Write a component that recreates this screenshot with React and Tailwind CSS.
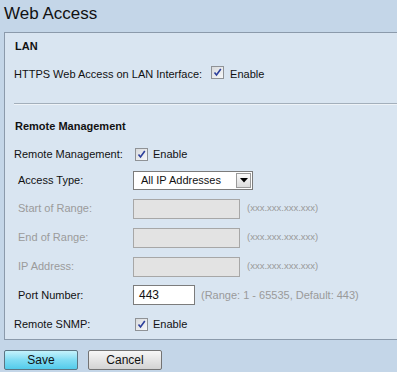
import React from 'react'

const Check = () => (
  <span className="inline-flex w-[13px] h-[13px] shrink-0 items-center justify-center border border-[#8f9296] bg-gradient-to-br from-[#d8dadd] to-[#f7f8f9]">
    <svg width="11" height="11" viewBox="0 0 11 11">
      <path d="M2.5 5.5 L4.5 8 L8.8 2" fill="none" stroke="#2c3f9c" strokeWidth="1.6" />
    </svg>
  </span>
)

const DisabledRow = ({ label, h }) => (
  <div className={`flex items-center ${h}`}>
    <div className="w-[119px] pl-[4px] text-[#9b9b9b]">{label}</div>
    <div className="w-[107px] h-[20px] border border-[#a7a7a7] bg-[#e3e3e3]" />
    <span className="ml-[7px] text-[9.5px] text-[#9a9a9a]">(xxx.xxx.xxx.xxx)</span>
  </div>
)

export default function App() {
  return (
    <div className="w-[397px] h-[372px] overflow-hidden bg-[#c4d6e8] font-['Liberation_Sans',Arial,sans-serif] text-[11px] text-[#111]">
      <h1 className="h-[32px] pl-[4px] pt-[3px] text-[17px] leading-[22px] text-[#111]">Web Access</h1>

      <div className="ml-[4px] border-l border-t border-b border-[#8b9aab] bg-[#d9e5f1] pl-[9px]">
        <div className="h-[27px] flex items-center pl-px font-bold">LAN</div>
        <div className="h-[28px] flex items-center">
          <span>HTTPS Web Access on LAN Interface:</span>
          <span className="ml-[9px]"><Check /></span>
          <span className="ml-[6px]">Enable</span>
        </div>

        <div className="mt-[15px] border-t border-b border-t-[#a3afbb] border-b-[#eef3f8]" />

        <div className="h-[36px] pt-[6px] flex items-center pl-px font-bold">Remote Management</div>

        <div className="h-[26px] flex items-center">
          <div className="w-[121px]">Remote Management:</div>
          <Check />
          <span className="ml-[5px]">Enable</span>
        </div>

        <div className="h-[27px] flex items-center">
          <div className="w-[119px] pl-[4px]">Access Type:</div>
          <div className="w-[120px] h-[19px] flex items-center border border-[#7b7b7b] bg-white">
            <span className="flex-1 pl-[7px]">All IP Addresses</span>
            <span className="w-[15px] h-[15px] mr-px flex items-center justify-center border border-[#9a9a9a] bg-gradient-to-b from-[#fafafa] to-[#dcdcdc]">
              <svg width="8" height="5" viewBox="0 0 8 5">
                <path d="M0 0 H8 L4 4.5 Z" fill="#000" />
              </svg>
            </span>
          </div>
        </div>

        <DisabledRow label="Start of Range:" h="h-[29px]" />
        <DisabledRow label="End of Range:" h="h-[29px]" />
        <DisabledRow label="IP Address:" h="h-[29px]" />

        <div className="h-[28px] flex items-center">
          <div className="w-[119px] pl-[4px]">Port Number:</div>
          <div className="w-[62px] h-[20px] flex items-center pl-[5px] border border-[#7c7c7c] bg-white text-[12px]">443</div>
          <span className="ml-[6px] text-[#9a9a9a]">(Range: 1 - 65535, Default: 443)</span>
        </div>

        <div className="h-[30px] flex items-center">
          <div className="w-[121px]">Remote SNMP:</div>
          <Check />
          <span className="ml-[5px]">Enable</span>
        </div>
      </div>

      <div className="flex gap-[10px] pl-[4px] pt-[10px]">
        <button className="w-[74px] h-[20px] rounded-[2px] border border-[#5b7583] bg-gradient-to-b from-[#c4f2fc] via-[#7fdcf3] to-[#52cbeb] text-[12px] text-[#111]">
          Save
        </button>
        <button className="w-[74px] h-[20px] rounded-[2px] border border-[#737373] bg-gradient-to-b from-[#f7f7f7] to-[#d3d3d3] text-[12px] text-[#111]">
          Cancel
        </button>
      </div>
    </div>
  )
}
